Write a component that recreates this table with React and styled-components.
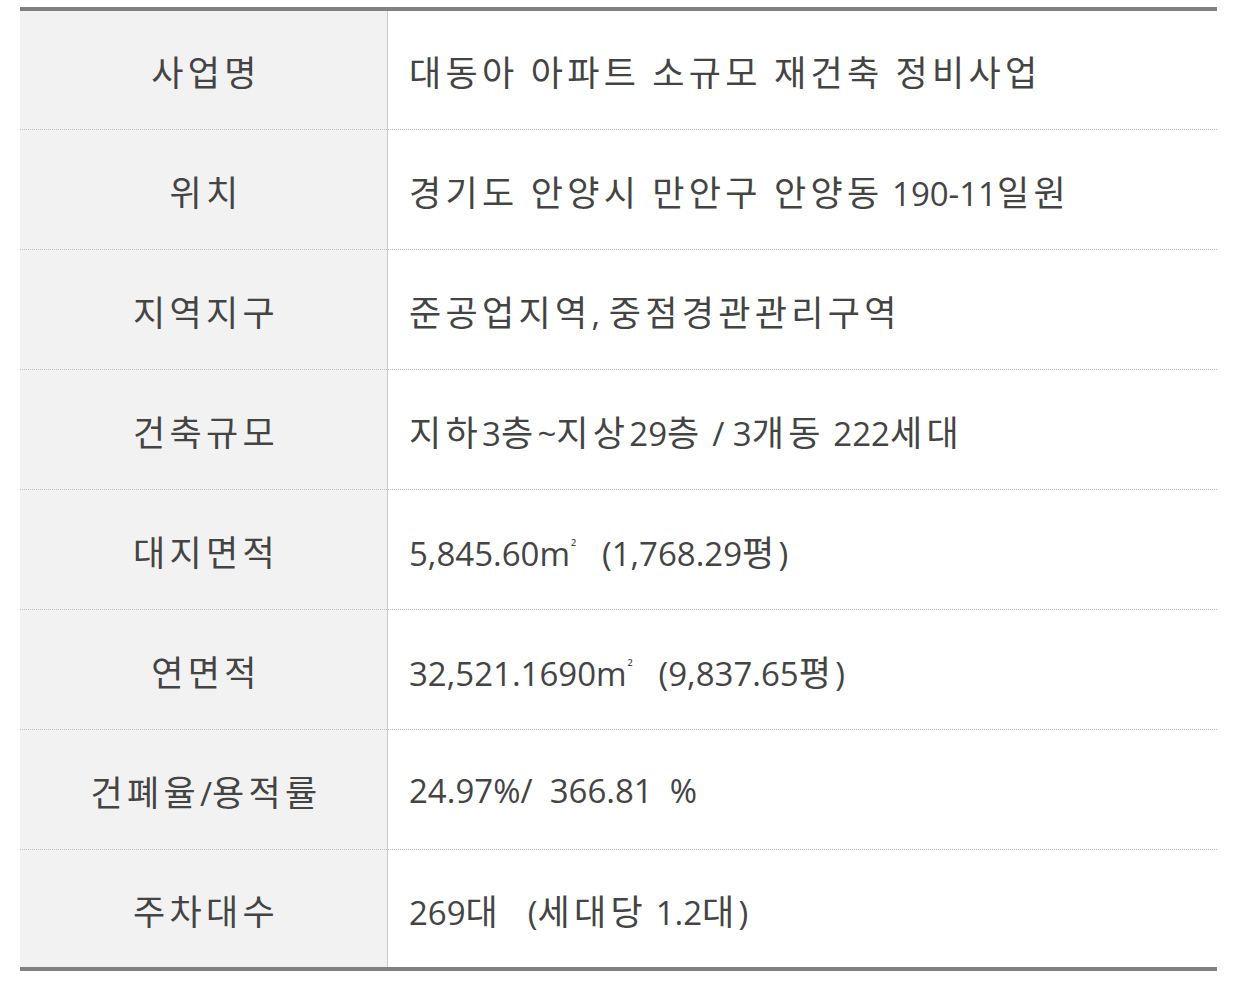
import React from "react"
import styled, { createGlobalStyle } from "styled-components"

const rows = [
  ["사업명", "대동아 아파트 소규모 재건축 정비사업"],
  ["위치", "경기도 안양시 만안구 안양동 190-11일원"],
  ["지역지구", "준공업지역, 중점경관관리구역"],
  ["건축규모", "지하3층~지상29층 / 3개동 222세대"],
  ["대지면적", "5,845.60m²   (1,768.29평)"],
  ["연면적", "32,521.1690m²   (9,837.65평)"],
  ["건폐율/용적률", "24.97%/  366.81  %"],
  ["주차대수", "269대   (세대당 1.2대)"],
]

// hangul glyphs in the original are set wider than the latin ones
const Text = ({ children }) => {
  const parts = children.split(/([가-힣]+(?: (?=[가-힣]))?|²)/)
  return parts.map((part, i) => {
    if (part === "²") return <Sup key={i}>²</Sup>
    if (/[가-힣]/.test(part)) return <Hangul key={i}>{part}</Hangul>
    return part
  })
}

const App = () => {
  return (
    <Page>
      <GlobalStyle />
      <Table>
        <tbody>
          {rows.map(([label, value]) => (
            <Row key={label}>
              <Label>
                <Text>{label}</Text>
              </Label>
              <Value>
                <Text>{value}</Text>
              </Value>
            </Row>
          ))}
        </tbody>
      </Table>
    </Page>
  )
}

export default App

const GlobalStyle = createGlobalStyle`
  body {
    margin: 0;
    background: #fff;
  }
`
const Page = styled.div`
  padding: 7px 29px 0 20px;
  font-family: "Open Sans", "Noto Sans CJK KR", sans-serif;
  color: #444;
`
const Table = styled.table`
  width: 100%;
  border-collapse: collapse;
  border-top: 4px solid #808080;
  border-bottom: 4px solid #808080;
`
const Row = styled.tr`
  height: 120px;
  border-bottom: 1px dotted #bdbdbd;
  &:last-child {
    border-bottom: none;
  }
`
const Label = styled.td`
  width: 367px;
  padding: 2px 0 0 0;
  background: #f2f2f2;
  border-right: 1px solid #cccccc;
  text-align: center;
  text-indent: 5px;
  font-size: 33px;
  vertical-align: middle;
`
const Value = styled.td`
  padding: 2px 0 0 21px;
  font-size: 33px;
  white-space: pre;
  vertical-align: middle;
`
const Hangul = styled.span`
  font-family: "Noto Sans CJK KR", sans-serif;
  font-size: 35px;
  letter-spacing: 4.3px;
`
const Sup = styled.span`
  font-size: 15px;
  vertical-align: 14px;
  margin-left: 1px;
`
